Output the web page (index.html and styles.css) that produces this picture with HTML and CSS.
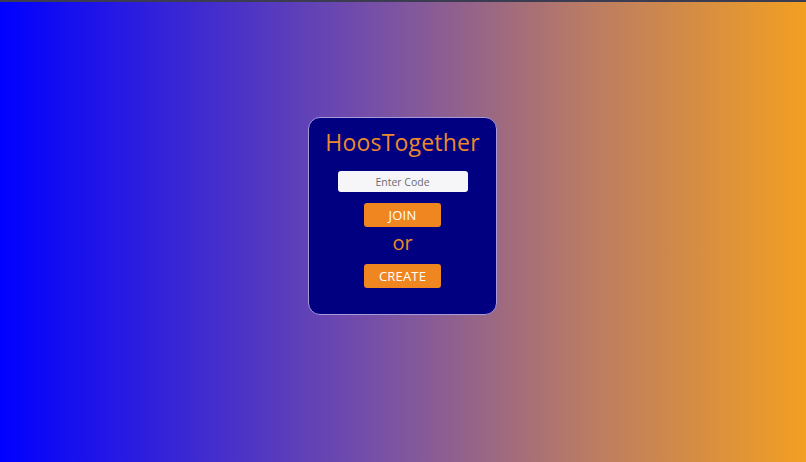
FILE: index.html
```html
<!DOCTYPE html>
<html>
<head>
<meta charset="utf-8">
<link rel="stylesheet" href="styles.css">
</head>
<body>
<div class="page">
  <div class="card">
    <h1 class="title">HoosTogether</h1>
    <input class="code" type="text" placeholder="Enter Code">
    <button class="btn">JOIN</button>
    <div class="or">or</div>
    <button class="btn">CREATE</button>
  </div>
</div>
</body>
</html>
```
FILE: styles.css
```css
html, body {
  margin: 0;
  padding: 0;
}
body {
  width: 806px;
  height: 462px;
  overflow: hidden;
  font-family: "Open Sans", "Noto Sans", sans-serif;
}
.page {
  box-sizing: border-box;
  height: 462px;
  border-top: 2px solid #3b3b52;
  background: linear-gradient(to right, #0000ff 0%, #7a52a4 48%, #b87a66 72%, #f29f22 100%);
  display: flex;
  justify-content: center;
  align-items: flex-start;
  padding-top: 115px;
  padding-right: 1px;
}
.card {
  box-sizing: border-box;
  width: 189px;
  height: 198px;
  background: #000080;
  border: 1px solid #a89ad8;
  border-radius: 12px;
  display: flex;
  flex-direction: column;
  align-items: center;
  padding-top: 10px;
}
.title {
  margin: 0;
  font-weight: 400;
  font-size: 23px;
  line-height: 28px;
  color: #ec8a2c;
  letter-spacing: 0.2px;
}
.code {
  box-sizing: border-box;
  margin-top: 15px;
  width: 130px;
  height: 21px;
  border: none;
  border-radius: 3px;
  background: #f6f6f8;
  text-align: center;
  font-family: inherit;
  font-size: 10.5px;
  color: #555;
  padding: 0;
}
.code::placeholder {
  color: #6a6a72;
}
.btn {
  box-sizing: border-box;
  width: 77px;
  height: 24px;
  border: none;
  border-radius: 3px;
  background: #f0861f;
  color: #fff;
  font-family: inherit;
  font-size: 13px;
  letter-spacing: 0.2px;
  padding: 0;
  margin-top: 11px;
}
.or {
  margin-top: 4px;
  font-size: 20px;
  line-height: 23px;
  color: #ec8a2c;
  margin-bottom: 10px;
}
.or + .btn {
  margin-top: 0;
}
```
